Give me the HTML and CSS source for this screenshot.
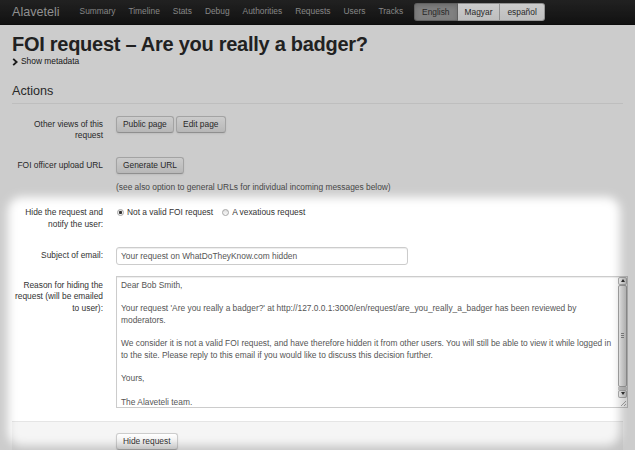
FILE: index.html
```html
<!DOCTYPE html>
<html lang="en">
<head>
<meta charset="utf-8">
<title>FOI request – Are you really a badger?</title>
<link rel="stylesheet" href="styles.css">
</head>
<body>
<div class="navbar">
  <a class="brand">Alaveteli</a>
  <ul class="nav">
    <li>Summary</li>
    <li>Timeline</li>
    <li>Stats</li>
    <li>Debug</li>
    <li>Authorities</li>
    <li>Requests</li>
    <li>Users</li>
    <li>Tracks</li>
  </ul>
  <div class="lang">
    <span class="lbtn active">English</span><span class="lbtn">Magyar</span><span class="lbtn">español</span>
  </div>
</div>
<div class="container">
  <h1>FOI request – Are you really a badger?</h1>
  <a class="toggle"><svg class="chev" width="6" height="8" viewBox="0 0 6 8"><path d="M1.2 0.9 L4.6 4 L1.2 7.1" fill="none" stroke="#222" stroke-width="1.9"/></svg>Show metadata</a>
  <h2>Actions</h2>
  <form class="form">
    <div class="row r1">
      <label class="clabel">Other views of this request</label>
      <div class="controls">
        <button type="button" class="btn">Public page</button>
        <button type="button" class="btn">Edit page</button>
      </div>
    </div>
    <div class="row r2">
      <label class="clabel">FOI officer upload URL</label>
      <div class="controls">
        <button type="button" class="btn">Generate URL</button>
        <p class="help">(see also option to general URLs for individual incoming messages below)</p>
      </div>
    </div>
    <div class="spotlight">
      <div class="row r3">
        <label class="clabel">Hide the request and notify the user:</label>
        <div class="controls radios">
          <label class="radio"><input type="radio" name="reason" checked>Not a valid FOI request</label>
          <label class="radio"><input type="radio" name="reason">A vexatious request</label>
        </div>
      </div>
      <div class="row r4">
        <label class="clabel">Subject of email:</label>
        <div class="controls">
          <input class="text" type="text" value="Your request on WhatDoTheyKnow.com hidden">
        </div>
      </div>
      <div class="row r5">
        <label class="clabel">Reason for hiding the request (will be emailed to user):</label>
        <div class="controls">
          <div class="tabox">
            <textarea class="ta" wrap="off">Dear Bob Smith,

Your request 'Are you really a badger?' at http://127.0.0.1:3000/en/request/are_you_really_a_badger has been reviewed by
moderators.

We consider it is not a valid FOI request, and have therefore hidden it from other users. You will still be able to view it while logged in
to the site. Please reply to this email if you would like to discuss this decision further.

Yours,

The Alaveteli team.</textarea>
            <div class="sb">
              <div class="sb-btn"><span class="tri up"></span></div>
              <div class="sb-thumb"><span class="grip"></span></div>
              <div class="sb-track"></div>
              <div class="sb-btn"><span class="tri down"></span></div>
              <div class="sb-corner"><svg width="8" height="8" viewBox="0 0 8 8"><path d="M7 2 L2 7 M7 5 L5 7" stroke="#999" stroke-width="0.8"/></svg></div>
            </div>
          </div>
        </div>
      </div>
      <div class="form-actions">
        <button type="button" class="btn">Hide request</button>
      </div>
    </div>
  </form>
</div>
</body>
</html>
```
FILE: styles.css
```css
* { box-sizing: border-box; }

body {
  margin: 0;
  font-family: "Liberation Sans", Arial, sans-serif;
  font-size: 8.4px;
  line-height: 11.7px;
  color: #333;
  background: #fff;
}

.navbar {
  height: 25px;
  display: flex;
  align-items: center;
  padding-left: 12px;
  background: linear-gradient(#2a2a2a, #161616);
  border-bottom: 1px solid #111;
}

.brand {
  font-size: 12.6px;
  line-height: 25px;
  color: #b4b4b4;
  margin-right: 13.5px;
}

.nav {
  display: flex;
  list-style: none;
  margin: 0;
  padding: 0;
}

.nav li {
  padding: 0 6.5px;
  color: #a8a8a8;
}

.lang {
  display: flex;
  margin-left: 4.3px;
}

.lbtn {
  height: 18px;
  line-height: 16px;
  padding: 0 7px;
  color: #333;
  border: 1px solid rgba(0, 0, 0, 0.25);
  border-left-width: 0;
  background: linear-gradient(#fff, #eee);
}

.lbtn:first-child {
  border-left-width: 1px;
  border-radius: 3px 0 0 3px;
}

.lbtn:last-child {
  border-radius: 0 3px 3px 0;
}

.lbtn.active {
  background: #a0a0a0;
  box-shadow: inset 0 2px 4px rgba(0, 0, 0, 0.15);
}

.container {
  padding: 0 12px;
}

h1 {
  font-size: 20px;
  line-height: 24px;
  margin: 7px 0 0;
  font-weight: bold;
  letter-spacing: -0.27px;
  color: #2a2a2a;
}

.toggle {
  display: flex;
  align-items: center;
  gap: 3px;
  color: #222;
}

h2 {
  font-size: 12.6px;
  line-height: 14px;
  font-weight: normal;
  margin: 16px 0 0;
  padding-bottom: 5px;
  border-bottom: 1px solid #eee;
}

.form {
  margin-top: 12px;
}

.row {
  display: grid;
  grid-template-columns: 91px 1fr;
  column-gap: 13px;
  align-items: start;
}

.clabel {
  text-align: right;
  padding-top: 3px;
}

.btn {
  font-family: inherit;
  font-size: 8.4px;
  height: 17px;
  line-height: 15px;
  padding: 0 6px;
  margin: 0;
  color: #333;
  background: linear-gradient(#fff, #e6e6e6);
  border: 1px solid #ccc;
  border-bottom-color: #b3b3b3;
  border-radius: 3px;
  box-shadow: inset 0 1px 0 rgba(255, 255, 255, 0.2), 0 1px 2px rgba(0, 0, 0, 0.08);
  vertical-align: top;
}

.r1 { margin-bottom: 14.6px; }

.help {
  margin: 8px 0 0;
  color: #595959;
}

.spotlight {
  position: relative;
  padding-top: 10.5px;
}

.spotlight::after {
  content: "";
  position: absolute;
  top: -696px;
  left: -704px;
  right: -697px;
  bottom: -684px;
  border: 700px solid rgba(0, 0, 0, 0.2);
  border-radius: 714px;
  filter: blur(5px);
  pointer-events: none;
  z-index: 5;
}

.r3 { margin-bottom: 16.9px; }

.radios {
  padding-top: 3px;
  display: flex;
  align-items: flex-start;
  gap: 8px;
}

.radio {
  display: flex;
  align-items: center;
  gap: 3px;
  height: 11.7px;
}

.radio input {
  appearance: none;
  -webkit-appearance: none;
  width: 7px;
  height: 7px;
  margin: 0 0 0 1px;
  border: 1px solid #a6a6a6;
  border-radius: 50%;
  background: linear-gradient(#dedede, #fafafa);
}

.radio input:checked {
  background: radial-gradient(circle, #333 0, #333 1.3px, transparent 1.9px), linear-gradient(#dedede, #fafafa);
}

.r4 { margin-bottom: 10.5px; }

.text {
  display: block;
  width: 292px;
  height: 18px;
  margin: 0;
  padding: 0 4px;
  font-family: inherit;
  font-size: 8.4px;
  color: #555;
  background: #fff;
  border: 1px solid #ccc;
  border-radius: 3px;
  box-shadow: inset 0 1px 1px rgba(0, 0, 0, 0.075);
}

.r5 .clabel { padding-top: 4px; }

.tabox {
  display: flex;
  width: 512px;
  height: 132px;
  border: 1px solid #ccc;
  background: #fff;
  box-shadow: inset 0 1px 1px rgba(0, 0, 0, 0.075);
}

.ta {
  flex: 1;
  min-width: 0;
  margin: 0;
  padding: 3px 4px;
  border: 0;
  outline: none;
  resize: none;
  overflow: hidden;
  background: transparent;
  font-family: inherit;
  font-size: 8.4px;
  line-height: 11.7px;
  color: #555;
}

.sb {
  width: 9px;
  display: flex;
  flex-direction: column;
  background: #eee;
}

.sb-btn {
  height: 8px;
  display: flex;
  align-items: center;
  justify-content: center;
  border: 1px solid #b0b0b0;
  border-radius: 2px;
  background: linear-gradient(90deg, #f6f6f6, #dadada);
}

.tri {
  width: 0;
  height: 0;
  border-left: 2.5px solid transparent;
  border-right: 2.5px solid transparent;
}

.tri.up { border-bottom: 3px solid #333; }
.tri.down { border-top: 3px solid #333; }

.sb-thumb {
  flex: 1;
  display: flex;
  align-items: center;
  justify-content: center;
  border: 1px solid #a5a5a5;
  border-radius: 2px;
  background: linear-gradient(90deg, #f2f2f2, #d8d8d8);
}

.grip {
  width: 3px;
  height: 5px;
  background: repeating-linear-gradient(#888 0, #888 1px, transparent 1px, transparent 2px);
}

.sb-track {
  height: 3px;
  background: #c9c9c9;
}

.sb-corner {
  height: 9px;
  background: #fff;
  display: flex;
  align-items: flex-end;
  justify-content: flex-end;
}

.form-actions {
  margin-top: 13px;
  padding: 11px 0 12px 104px;
  background: #f5f5f5;
  border-top: 1px solid #e5e5e5;
}
```
